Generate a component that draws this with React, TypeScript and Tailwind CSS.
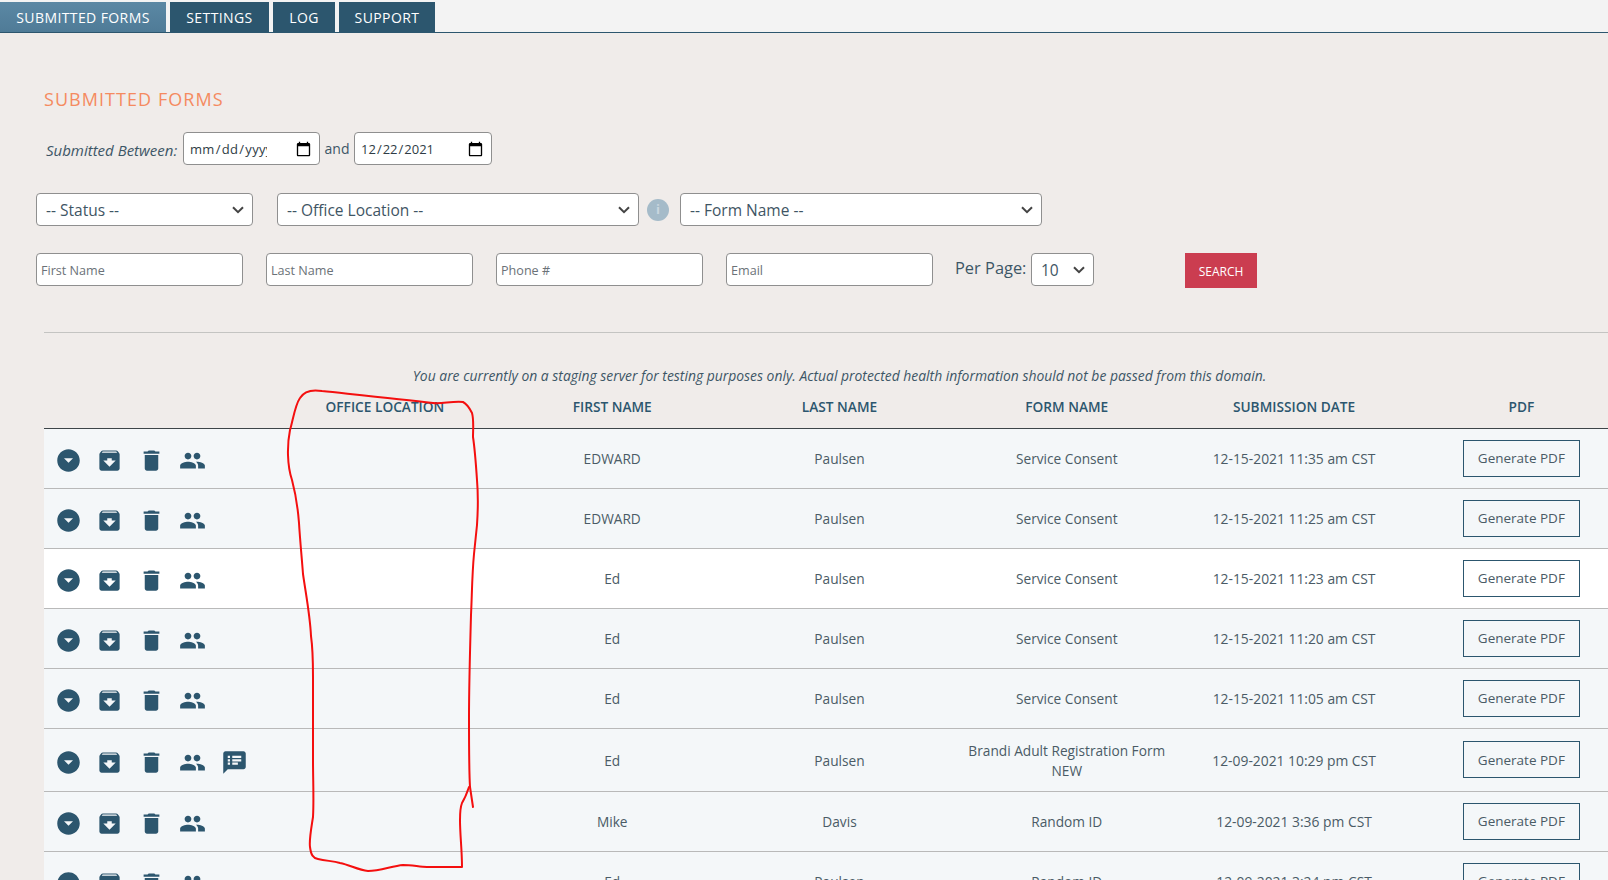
import React from "react";

const P = {
  circle: "M12 2C6.48 2 2 6.48 2 12s4.48 10 10 10 10-4.48 10-10S17.52 2 12 2zm0 12l-4-4h8l-4 4z",
  archive: "M20.54 5.23l-1.39-1.68C18.88 3.21 18.47 3 18 3H6c-.47 0-.88.21-1.16.55L3.46 5.23C3.17 5.57 3 6.02 3 6.5V19c0 1.1.9 2 2 2h14c1.1 0 2-.9 2-2V6.5c0-.48-.17-.93-.46-1.27zM12 17.5L6.5 12H10v-2h4v2h3.5L12 17.5zM5.12 5l.81-1h12l.94 1H5.12z",
  trash: "M6 19c0 1.1.9 2 2 2h8c1.1 0 2-.9 2-2V7H6v12zM19 4h-3.5l-1-1h-5l-1 1H5v2h14V4z",
  people: "M16 11c1.66 0 2.99-1.34 2.99-3S17.66 5 16 5c-1.66 0-3 1.34-3 3s1.34 3 3 3zm-8 0c1.66 0 2.99-1.34 2.99-3S9.66 5 8 5C6.34 5 5 6.34 5 8s1.34 3 3 3zm0 2c-2.33 0-7 1.17-7 3.5V19h14v-2.5c0-2.33-4.67-3.5-7-3.5zm8 0c-.29 0-.62.02-.97.05 1.16.84 1.97 1.97 1.97 3.45V19h6v-2.5c0-2.33-4.67-3.5-7-3.5z",
  notes: "M20 2H4c-1.1 0-1.99.9-1.99 2L2 22l4-4h14c1.1 0 2-.9 2-2V4c0-1.1-.9-2-2-2zM8 14H6v-2h2v2zm0-3H6V9h2v2zm0-3H6V6h2v2zm7 6h-5v-2h5v2zm3-3h-8V9h8v2zm0-3h-8V6h8v2z",
};

function Icon({ d }: { d: string }) {
  return (
    <svg viewBox="0 0 24 24" className="w-[27px] h-[27px] shrink-0 fill-[#2c566e]">
      <path d={d} />
    </svg>
  );
}

type Row = { first: string; last: string; form: React.ReactNode; date: string; h: string; bg: string; notes?: boolean };

const rows: Row[] = [
  { first: "EDWARD", last: "Paulsen", form: "Service Consent", date: "12-15-2021 11:35 am CST", h: "h-[60px]", bg: "bg-[#f4f7f9]" },
  { first: "EDWARD", last: "Paulsen", form: "Service Consent", date: "12-15-2021 11:25 am CST", h: "h-[60px]", bg: "bg-[#f4f7f9]" },
  { first: "Ed", last: "Paulsen", form: "Service Consent", date: "12-15-2021 11:23 am CST", h: "h-[60px]", bg: "bg-white" },
  { first: "Ed", last: "Paulsen", form: "Service Consent", date: "12-15-2021 11:20 am CST", h: "h-[60px]", bg: "bg-[#f4f7f9]" },
  { first: "Ed", last: "Paulsen", form: "Service Consent", date: "12-15-2021 11:05 am CST", h: "h-[60px]", bg: "bg-[#f4f7f9]" },
  { first: "Ed", last: "Paulsen", form: <>Brandi Adult Registration Form<br />NEW</>, date: "12-09-2021 10:29 pm CST", h: "h-[63px]", bg: "bg-[#f4f7f9]", notes: true },
  { first: "Mike", last: "Davis", form: "Random ID", date: "12-09-2021 3:36 pm CST", h: "h-[60px]", bg: "bg-[#f4f7f9]" },
  { first: "Ed", last: "Paulsen", form: "Random ID", date: "12-09-2021 3:24 pm CST", h: "h-[60px]", bg: "bg-[#f4f7f9]" },
];

const inputCls =
  "h-[33px] w-[207px] bg-white border border-[#8f8f8f] rounded-[4px] pl-[4px] pr-[5px] pt-[2px] text-[12.6px] text-[#4a5b66] placeholder:text-[#6b7278] outline-none";
const dateCls =
  "h-[33px] bg-white border border-[#8f8f8f] rounded-[4px] pl-[5px] pr-[7px] pt-[2px] text-[13px] text-[#2f3c45] outline-none [&::-webkit-calendar-picker-indicator]:w-[17px] [&::-webkit-calendar-picker-indicator]:h-[17px] [&::-webkit-calendar-picker-indicator]:m-0 [&::-webkit-calendar-picker-indicator]:p-0";

const tabCls = "h-[30px] flex items-center justify-center text-white text-[14px] tracking-[0.4px] bg-[#2c566e]";

function Select({ label, w, ml, pad }: { label: string; w: string; ml: string; pad: string }) {
  return (
    <div className={"relative shrink-0 " + w + " " + ml}>
      <select className={"appearance-none w-full h-[33px] bg-white border border-[#8f8f8f] rounded-[4px] pl-[9px] text-[15.5px] text-[#3f5564] outline-none " + pad}>
        <option>{label}</option>
      </select>
      <svg viewBox="0 0 12 8" className="absolute right-[9px] top-[13px] w-[12px] h-[8px] fill-none stroke-[#444444] stroke-2 pointer-events-none">
        <path d="M1 1.2l5 5 5-5" />
      </svg>
    </div>
  );
}

function Cell({ children }: { children: React.ReactNode }) {
  return <td className="text-center align-middle text-[13.7px] leading-[20px] text-[#4a5b66] p-0 pt-[2px]">{children}</td>;
}

function Head({ children }: { children?: React.ReactNode }) {
  return <th className="text-center align-middle text-[13.7px] font-semibold text-[#2c566e] p-0 pt-[2px]">{children}</th>;
}

export default function App() {
  return (
    <div className="relative w-full h-[880px] overflow-hidden bg-[#f0ecea] font-['Open_Sans','Noto_Sans',sans-serif]">
      <nav className="h-[33px] bg-[#f3f3f3] border-b border-[#2c566e] pt-[2px] flex gap-[4px]">
        <a className={tabCls + " w-[166px] bg-gradient-to-b from-[#5b88a4] to-[#4f7b97]"}>SUBMITTED FORMS</a>
        <a className={tabCls + " w-[99px]"}>SETTINGS</a>
        <a className={tabCls + " w-[62px]"}>LOG</a>
        <a className={tabCls + " w-[96px]"}>SUPPORT</a>
      </nav>

      <main className="pt-[54px]">
        <h1 className="ml-[44px] h-[24px] leading-[24px] text-[18px] font-normal tracking-[1.05px] text-[#f58a60]">SUBMITTED FORMS</h1>

        <div className="mt-[21px] ml-[46px] flex items-center h-[33px]">
          <span className="italic text-[15px] text-[#3d5666] w-[137px] pt-[3px] whitespace-nowrap">Submitted Between:</span>
          <input type="date" className={dateCls + " w-[137px] tracking-[0.3px] [&::-webkit-datetime-edit-fields-wrapper]:block [&::-webkit-datetime-edit-fields-wrapper]:w-[78px] [&::-webkit-datetime-edit-fields-wrapper]:overflow-hidden [&::-webkit-datetime-edit-fields-wrapper]:whitespace-nowrap"} />
          <span className="w-[34px] text-center text-[14px] text-[#3d5666]">and</span>
          <input type="date" defaultValue="2021-12-22" className={dateCls + " w-[138px]"} />
        </div>

        <div className="mt-[28px] ml-[36px] flex items-center">
          <Select label="-- Status --" w="w-[217px]" ml="" pad="pt-[2px]" />
          <Select label="-- Office Location --" w="w-[362px]" ml="ml-[24px]" pad="pt-[2px]" />
          <span className="ml-[8px] w-[22px] h-[22px] rounded-full bg-[#a5bbc9] text-[#c9d6df] text-[13px] font-bold flex items-center justify-center shrink-0">i</span>
          <Select label="-- Form Name --" w="w-[362px]" ml="ml-[11px]" pad="pt-[2px]" />
        </div>

        <div className="mt-[27px] ml-[36px] flex items-start">
          <input className={inputCls} placeholder="First Name" />
          <input className={inputCls + " ml-[23px]"} placeholder="Last Name" />
          <input className={inputCls + " ml-[23px]"} placeholder="Phone #" />
          <input className={inputCls + " ml-[23px]"} placeholder="Email" />
          <span className="ml-[22px] w-[76px] h-[30px] leading-[30px] text-[16.4px] text-[#3d5666] whitespace-nowrap">Per Page:</span>
          <Select label="10" w="w-[63px]" ml="" pad="pt-[3px]" />
          <button className="ml-[91px] w-[72px] h-[35px] pt-[2px] bg-[#cb3d50] text-white text-[12px]">SEARCH</button>
        </div>

        <hr className="mt-[44px] ml-[44px] border-0 border-t border-[#c4c4c2]" />

        <p className="mt-[34px] ml-[44px] w-[1591px] text-center italic text-[13.9px] leading-[18px] text-[#3d5666]">
          You are currently on a staging server for testing purposes only. Actual protected health information should not be passed from this domain.
        </p>

        <table className="ml-[44px] mt-[1px] w-[1591px] table-fixed border-collapse">
          <thead>
            <tr className="h-[42px] border-b border-[#3d4448]">
              <Head />
              <Head>OFFICE LOCATION</Head>
              <Head>FIRST NAME</Head>
              <Head>LAST NAME</Head>
              <Head>FORM NAME</Head>
              <Head>SUBMISSION DATE</Head>
              <Head>PDF</Head>
            </tr>
          </thead>
          <tbody>
            {rows.map((r, i) => (
              <tr key={i} className={r.h + " " + r.bg + " border-b border-[#b9b9b9]"}>
                <td className="p-0 align-middle">
                  <div className="flex items-center gap-[14.4px] pl-[11px] pt-[5px]">
                    <Icon d={P.circle} />
                    <Icon d={P.archive} />
                    <Icon d={P.trash} />
                    <Icon d={P.people} />
                    {r.notes && <Icon d={P.notes} />}
                  </div>
                </td>
                <Cell>{""}</Cell>
                <Cell>{r.first}</Cell>
                <Cell>{r.last}</Cell>
                <Cell>{r.form}</Cell>
                <Cell><span className="text-[13.85px]">{r.date}</span></Cell>
                <td className="text-center align-middle p-0">
                  <button className="w-[117px] h-[37px] pt-[1px] border border-[#2c566e] text-[13.5px] text-[#4a5b66]">Generate PDF</button>
                </td>
              </tr>
            ))}
          </tbody>
        </table>
      </main>

      <svg className="absolute left-0 top-0 w-[1608px] h-[880px] pointer-events-none fill-none stroke-[#f40f0f]" viewBox="0 0 1608 880" strokeWidth="2" strokeLinecap="round" strokeLinejoin="round">
        <path d="M433 403C400 399 360 395 322 391C310 389 303 393 300 398C295 405 293 420 290 430C287 445 287 465 292 480C296 495 298 510 299 523C300 540 302 560 303 574C306 595 310 615 311 636C313 650 313 665 313 677C313 700 313 730 313 760C313 780 314 800 313 817C311 830 309 840 310 847C311 855 313 858 318 859C327 861 333 861 340 863C350 865 358 870 368 871C380 871 392 866 403 865C412 865 420 867 427 867C440 867 452 867 462 867C462 850 460 835 460 820C460 812 460 808 462 803C465 798 467 793 469 787" />
        <path d="M433 403C442 404 452 401 463 402C467 404 470 409 472 413C474 420 473 430 473 437C475 450 476 465 477 480C478 492 478 510 477 525C476 535 475 545 474 554C472 575 472 595 471 615C470 650 469 690 469 718C469 745 469 770 470 787L473 807" />
      </svg>
    </div>
  );
}
